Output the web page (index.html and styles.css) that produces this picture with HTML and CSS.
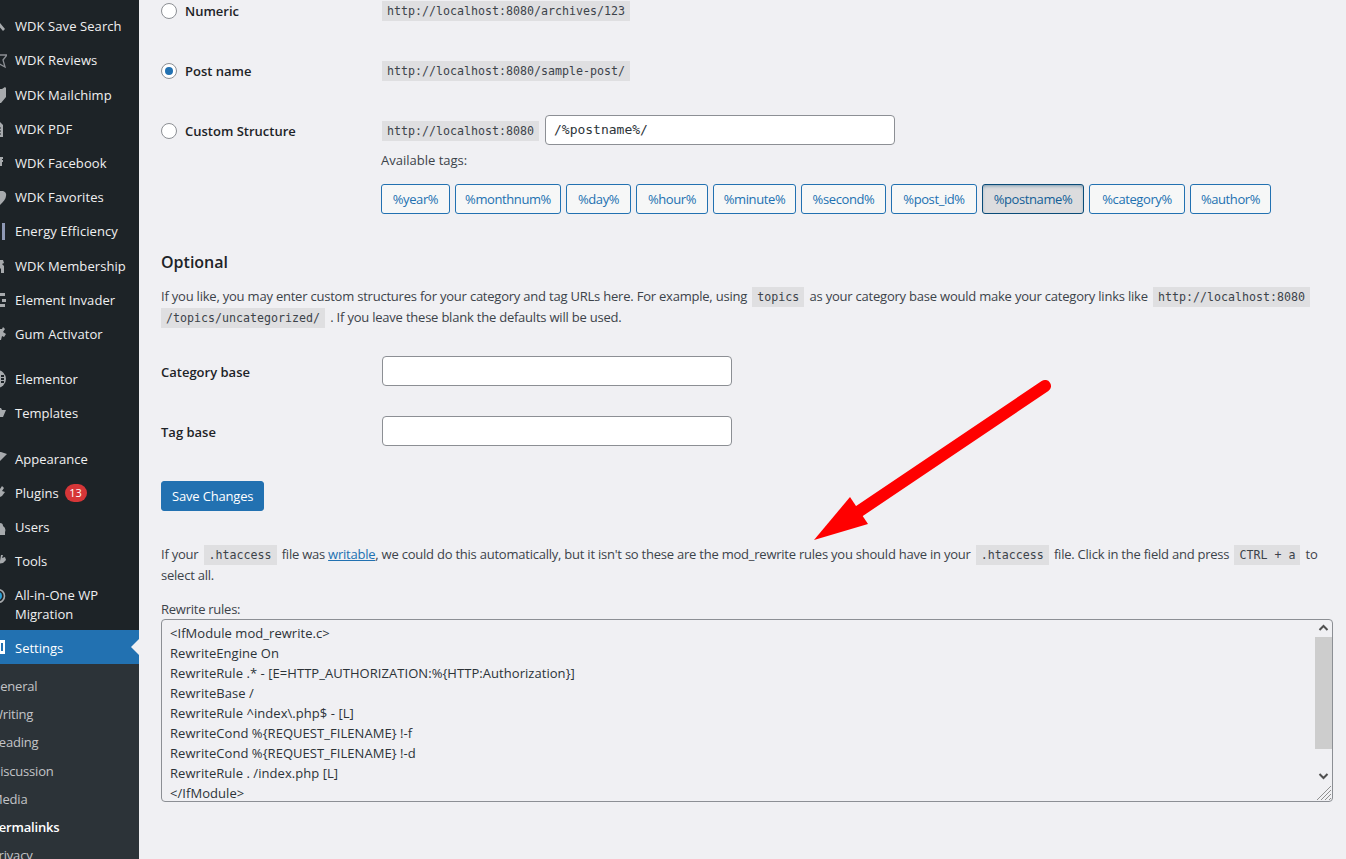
FILE: index.html
```html
<!DOCTYPE html>
<html lang="en">
<head>
<meta charset="utf-8">
<title>Permalink Settings</title>
<link rel="stylesheet" href="styles.css">
</head>
<body>
<div class="page">
  <nav class="sidebar">
    <ul class="menu group-a">
      <li><svg class="ico" viewBox="0 0 7 20"><path d="M-4 2l3 0 1 5 5 6-2 2-5-6-4-1z"/></svg>WDK Save Search</li>
      <li><svg class="ico" viewBox="0 0 7 20"><path d="M-3 5H7L3 10l2 7-7-4z" fill="none" stroke="#8c8f94" stroke-width="1.3"/></svg>WDK Reviews</li>
      <li><svg class="ico" viewBox="0 0 7 20"><path d="M-3 4h5l3-2 1 1v9l-5 6h-4z"/></svg>WDK Mailchimp</li>
      <li><svg class="ico" viewBox="0 0 7 20"><path d="M-3 3h3l3 3v12h-6z"/><path d="M-3 9h4M-3 12h4M-3 15h4" stroke="#1d2327"/></svg>WDK PDF</li>
      <li><svg class="ico" viewBox="0 0 7 20"><path d="M0 4h3v2H2v1h1v2H2v4H0z"/></svg>WDK Facebook</li>
      <li><svg class="ico" viewBox="0 0 7 20"><path d="M-3 4h6a4 4 0 0 1 3 5c0 3-3 6-6 9z"/></svg>WDK Favorites</li>
      <li><svg class="ico" viewBox="0 0 7 20"><rect x="2" y="2" width="3" height="17" fill="#8f99b5"/></svg>Energy Efficiency</li>
      <li><svg class="ico" viewBox="0 0 7 20"><path d="M0 4h3l1 3-2 1 2 2v7H1v-4l-1-1z"/></svg>WDK Membership</li>
      <li><svg class="ico" viewBox="0 0 7 20"><path d="M0 3h5v3H0zM2 9h4v3H2zM0 14h5v3H0z"/></svg>Element Invader</li>
      <li><svg class="ico" viewBox="0 0 7 20"><path d="M-3 5h5l1-2 2 2-2 3 3 2-2 3-2-1-1 4h-4z"/></svg>Gum Activator</li>
    </ul>
    <ul class="menu group-b">
      <li><svg class="ico" viewBox="0 0 7 20"><path d="M-3 1a9 9 0 0 1 9 9 9 9 0 0 1-9 9z"/><path d="M1 6h3v2H1zM1 9h3v2H1zM1 12h3v2H1z" fill="#1d2327"/></svg>Elementor</li>
      <li><svg class="ico" viewBox="0 0 7 20"><path d="M-3 5h4l1 2h4l-3 7h-6z"/></svg>Templates</li>
    </ul>
    <ul class="menu group-c">
      <li><svg class="ico" viewBox="0 0 7 20"><path d="M-3 3h4l6 2-7 7-3 1z"/></svg>Appearance</li>
      <li><svg class="ico" viewBox="0 0 7 20"><path d="M-3 6h3l2-3 2 2-2 3 3 1-3 4-2 1-1 3h-2z"/></svg>Plugins<span class="badge">13</span></li>
      <li><svg class="ico" viewBox="0 0 7 20"><path d="M-3 9a3 3 0 0 1 6 0a5 5 0 0 1 2 6v3h-8z"/></svg>Users</li>
      <li><svg class="ico" viewBox="0 0 7 20"><path d="M-3 11l3-1 1-6 2 0-1 3 3-1 1 3-3 3-6 1z"/></svg>Tools</li>
      <li class="two"><svg class="ico" viewBox="0 0 7 20"><circle cx="-2" cy="10" r="6.5" fill="none" stroke="#a7aaad" stroke-width="1.6"/><circle cx="-2" cy="10" r="4" fill="#2a9fd6"/></svg><span>All-in-One WP Migration</span></li>
      <li class="current"><svg class="ico" viewBox="0 0 7 20"><path d="M-3 3h8v14h-8z" fill="#fff"/><path d="M1 6h2v8H1z" fill="#2271b1"/></svg>Settings</li>
    </ul>
    <ul class="submenu">
      <li>General</li>
      <li>Writing</li>
      <li>Reading</li>
      <li>Discussion</li>
      <li>Media</li>
      <li class="on">Permalinks</li>
      <li>Privacy</li>
    </ul>
  </nav>

  <main class="content">
    <div class="option">
      <label class="opt-label"><span class="radio"></span>Numeric</label>
      <div class="opt-value"><code>http://localhost:8080/archives/123</code></div>
    </div>
    <div class="option">
      <label class="opt-label"><span class="radio checked"></span>Post name</label>
      <div class="opt-value"><code>http://localhost:8080/sample-post/</code></div>
    </div>
    <div class="option custom">
      <label class="opt-label"><span class="radio"></span>Custom Structure</label>
      <div class="opt-value"><code>http://localhost:8080</code><input class="field mono" type="text" value="/%postname%/"></div>
    </div>
    <p class="avail">Available tags:</p>
    <div class="tags">
      <button class="tag">%year%</button>
      <button class="tag">%monthnum%</button>
      <button class="tag">%day%</button>
      <button class="tag">%hour%</button>
      <button class="tag">%minute%</button>
      <button class="tag">%second%</button>
      <button class="tag">%post_id%</button>
      <button class="tag active">%postname%</button>
      <button class="tag">%category%</button>
      <button class="tag">%author%</button>
    </div>

    <h2>Optional</h2>
    <p class="para">If you like, you may enter custom structures for your category and tag URLs here. For example, using <code>topics</code> as your category base would make your category links like <code>http://localhost:8080</code><br><code>/topics/uncategorized/</code> . If you leave these blank the defaults will be used.</p>

    <div class="form-row first"><label>Category base</label><input class="field wide" type="text"></div>
    <div class="form-row"><label>Tag base</label><input class="field wide" type="text"></div>

    <button class="primary">Save Changes</button>

    <p class="para note">If your <code>.htaccess</code> file was <a href="#">writable</a>, we could do this automatically, but it isn't so these are the mod_rewrite rules you should have in your <code>.htaccess</code> file. Click in the field and press <code>CTRL + a</code> to select all.</p>

    <p class="rules-label">Rewrite rules:</p>
    <div class="rules">
      <textarea class="rules-text" readonly>&lt;IfModule mod_rewrite.c&gt;
RewriteEngine On
RewriteRule .* - [E=HTTP_AUTHORIZATION:%{HTTP:Authorization}]
RewriteBase /
RewriteRule ^index\.php$ - [L]
RewriteCond %{REQUEST_FILENAME} !-f
RewriteCond %{REQUEST_FILENAME} !-d
RewriteRule . /index.php [L]
&lt;/IfModule&gt;</textarea>
      <div class="scrollbar">
        <svg class="sb-arrow" viewBox="0 0 16 17"><path d="M4 10l4-4 4 4" fill="none" stroke="#505050" stroke-width="2"/></svg>
        <div class="sb-thumb"></div>
        <svg class="sb-arrow" viewBox="0 0 16 17"><path d="M4 7l4 4 4-4" fill="none" stroke="#505050" stroke-width="2"/></svg>
        <svg class="sb-grip" viewBox="0 0 16 16"><path d="M1 15L15 1M5 15L15 5M9 15l6-6M13 15l2-2" stroke="#909090" stroke-width="1" fill="none"/></svg>
      </div>
    </div>
  </main>

  <svg class="arrow" viewBox="0 0 1346 859" aria-hidden="true">
    <path d="M1045 386L855 514" stroke="#ff0000" stroke-width="12" stroke-linecap="round" fill="none"/>
    <path d="M814 540L850 497 868 524z" fill="#ff0000"/>
  </svg>
</div>
</body>
</html>
```
FILE: styles.css
```css
* { box-sizing: border-box; }
html, body { margin: 0; height: 100%; overflow: hidden; }
body { background: #f0f0f3; color: #3c434a; font: 13px/1.4 "Open Sans", sans-serif; }
.page { position: relative; display: flex; width: 1346px; height: 859px; overflow: hidden; }

.sidebar { flex: 0 0 139px; background: #1d2327; color: #f0f0f1; height: 859px; overflow: hidden; }
.menu, .submenu { list-style: none; margin: 0; padding: 0; }
.group-a { margin-top: 9.2px; letter-spacing: .08px; }
.group-b { margin-top: 10.6px; }
.group-c { margin-top: 11.8px; }
.menu li { position: relative; display: flex; align-items: center; height: 34.2px; padding-left: 15px; white-space: nowrap; }
.menu li.two { height: 51.2px; padding-top: 1px; white-space: normal; line-height: 19px; }
.ico { position: absolute; left: 0; top: 7px; width: 7px; height: 20px; fill: #a7aaad; overflow: hidden; }
.badge { display: inline-block; min-width: 22px; height: 18px; margin-left: 6px; padding: 0 4px; border-radius: 9px; background: #d63638; color: #fff; font-size: 11px; line-height: 18px; text-align: center; }
.menu li.current { background: #2271b1; color: #fff; height: 34px; padding-top: 2px; }
.menu li.current::after { content: ""; position: absolute; right: 0; top: 9px; border: 8px solid transparent; border-right-color: #f0f0f3; border-left-width: 0; }
.submenu { background: #2c3338; padding-top: 8.2px; color: #c3c4c7; height: 200px; letter-spacing: -.2px; }
.submenu li { height: 28.2px; line-height: 28px; margin-left: -21px; padding-left: 12px; white-space: nowrap; }
.submenu li.on { color: #fff; font-weight: 600; }

.content { flex: 1; padding-left: 22px; padding-right: 13px; min-width: 0; }
.option { display: flex; align-items: center; height: 60px; color: #1d2327; }
.option:first-child { margin-top: -19px; }
.opt-label { flex: 0 0 221px; display: flex; align-items: center; font-weight: 600; font-size: 13px; }
.radio { flex: 0 0 16px; width: 16px; height: 16px; margin-right: 8px; border: 1px solid #8c8f94; border-radius: 50%; background: #fff; display: flex; align-items: center; justify-content: center; }
.radio.checked::before { content: ""; width: 8px; height: 8px; border-radius: 50%; background: #2271b1; }
.opt-value { display: flex; align-items: center; }
code { background: rgba(0,0,0,.07); color: #3c434a; font: 11.63px/20px "DejaVu Sans Mono", monospace; letter-spacing: 0; word-spacing: 0; padding: 0 5px; display: inline-block; }
.para code { margin: 0 2px; }
.para br + code { margin-left: 0; }
.field { height: 30px; border: 1px solid #8c8f94; border-radius: 4px; background: #fff; color: #2c3338; padding: 0 8px; font: 13px "Open Sans", sans-serif; }
.field.mono { width: 350px; margin: 0 0 3px 6px; font: 13px "DejaVu Sans Mono", monospace; }
.avail { margin: 0 0 0 220px; line-height: 20px; }
.custom { margin-bottom: -11px; }
.tags { display: flex; gap: 5px; margin: 14px 0 0 220px; }
.tag { height: 30px; padding: 0; text-align: center; border: 1px solid #2271b1; border-radius: 3px; background: #f6f7f7; color: #2271b1; font: 13px "Open Sans", sans-serif; letter-spacing: -.4px; white-space: nowrap; }
.tag:nth-child(1) { width: 69px; }
.tag:nth-child(2) { width: 106px; }
.tag:nth-child(3) { width: 65px; }
.tag:nth-child(4) { width: 72px; }
.tag:nth-child(5) { width: 83px; }
.tag:nth-child(6) { width: 85px; }
.tag:nth-child(7) { width: 86px; }
.tag:nth-child(8) { width: 102px; }
.tag:nth-child(9) { width: 96px; }
.tag:nth-child(10) { width: 81px; }
.tag.active { background: #dcdcde; border-color: #0a4b78; color: #135e96; box-shadow: inset 0 2px 5px -3px #0a4b78; }
h2 { margin: 36px 0 0; color: #1d2327; font-size: 16px; line-height: 24px; font-weight: 600; }
.para { margin: 12px 0 0; line-height: 20px; letter-spacing: -.23px; word-spacing: .08px; }
.form-row { display: flex; align-items: center; height: 60px; color: #1d2327; font-weight: 600; }
.form-row.first { margin-top: 14px; }
.form-row label { flex: 0 0 221px; }
.field.wide { width: 350px; margin-bottom: 2px; }
.primary { display: block; margin-top: 19px; height: 30px; padding: 0 10px; border: 1px solid #2271b1; border-radius: 3px; background: #2271b1; color: #fff; font: 13px "Open Sans", sans-serif; letter-spacing: -.17px; }
.note { margin-top: 33px; word-spacing: 0; }
a { color: #2271b1; }
.rules-label { margin: 14px 0 0; line-height: 20px; letter-spacing: -.25px; }
.rules { display: flex; height: 183px; border: 1px solid #8c8f94; border-radius: 4px; overflow: hidden; background: #f0f0f3; }
.rules-text { flex: 1; height: 181px; border: 0; padding: 3px 8px; margin: 0; resize: none; overflow: hidden; outline: 0; background: transparent; color: #2c3338; font: 13px/20px "Open Sans", sans-serif; letter-spacing: .05px; }
.scrollbar { position: relative; flex: 0 0 17px; display: flex; flex-direction: column; }
.sb-arrow { flex: 0 0 17px; width: 17px; height: 17px; }
.sb-thumb { flex: 0 0 112px; margin-bottom: 18px; background: #cdcdcd; }
.sb-grip { position: absolute; right: 0; bottom: 0; width: 16px; height: 16px; }

.arrow { position: absolute; left: 0; top: 0; width: 1346px; height: 859px; pointer-events: none; }
```
